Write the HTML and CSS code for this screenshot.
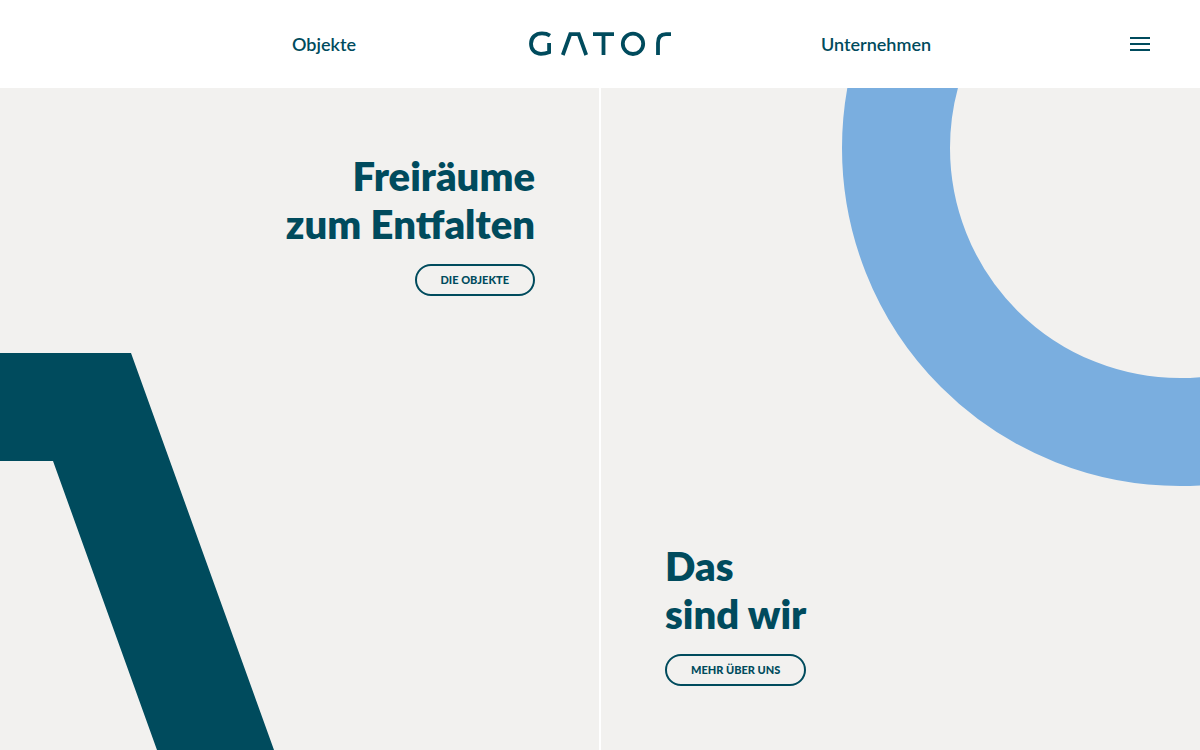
FILE: index.html
```html
<!DOCTYPE html>
<html lang="de">
<head>
    <meta charset="UTF-8">
    <meta name="viewport" content="width=device-width, initial-scale=1.0">
    <title>GATOR</title>
    <link rel="stylesheet" href="styles.css">
</head>
<body>
    <header class="header">
        <nav class="nav">
            <a class="nav-link" href="#objekte">Objekte</a>
            <a class="logo" href="#" aria-label="GATOR">
                <svg width="144" height="26" viewBox="0 0 144 26" fill="none" stroke="currentColor" stroke-width="3.800">
                    <path d="M22 4.600C19.500 3 17 2.400 14 2.400C7.500 2.400 3 6.500 3 12.800S7.500 22.800 13 22.800C16 22.800 18.500 22.300 21.100 21.300V12"/>
                    <path d="M34.800 24L42.300 3.200H50.700L58.200 24"/>
                    <path d="M65 3.200H86M75.500 3.200V24"/>
                    <circle cx="105" cy="12.800" r="10.200"/>
                    <path d="M130 24V12C130 6 132.500 3.200 138 3.200H143"/>
                </svg>
            </a>
            <a class="nav-link" href="#unternehmen">Unternehmen</a>
        </nav>
        <button class="menu" type="button" aria-label="Menü">
            <svg width="20" height="14" viewBox="0 0 20 14" stroke="currentColor" stroke-width="2">
                <path d="M0 1H20M0 7H20M0 13H20"/>
            </svg>
        </button>
    </header>

    <main class="panels">
        <section class="panel panel-objects" id="objekte">
            <svg class="shape shape-a" width="274" height="397" viewBox="0 0 274 397" aria-hidden="true">
                <polygon points="0,0 131,0 274,397 157,397 53,108 0,108"/>
            </svg>
            <div class="content">
                <h2>Freiräume<br>zum Entfalten</h2>
                <a class="button" href="#objekte">Die Objekte</a>
            </div>
        </section>
        <section class="panel panel-company" id="unternehmen">
            <svg class="shape shape-o" width="359" height="398" viewBox="0 0 359 398" aria-hidden="true">
                <ellipse cx="339" cy="60" rx="284" ry="284"/>
            </svg>
            <div class="content">
                <h2>Das<br>sind wir</h2>
                <a class="button" href="#unternehmen">Mehr über uns</a>
            </div>
        </section>
    </main>
</body>
</html>
```

FILE: styles.css
```css
* {
    box-sizing: border-box;
}

body {
    display: flex;
    flex-direction: column;
    min-height: 100vh;
    margin: 0;
    background-color: #fff;
    color: #004b5d;
    font-family: Lato, sans-serif;
}

a {
    color: inherit;
    text-decoration: none;
}

.header {
    display: grid;
    grid-template-columns: 1fr 69% 1fr;
    align-items: center;
    height: 88px;
}

.nav {
    display: grid;
    grid-column: 2;
    grid-template-columns: repeat(3, 1fr);
    align-items: center;
    justify-items: center;
}

.nav-link {
    font-size: 18px;
    font-weight: 600;
    line-height: 24px;
}

.logo svg,
.menu svg {
    display: block;
}

.menu {
    justify-self: end;
    margin-right: 42px;
    padding: 8px;
    border: 0;
    background: none;
    color: inherit;
    cursor: pointer;
}

.panels {
    display: grid;
    flex: 1;
    grid-template-columns: 1fr 1fr;
    gap: 2px;
}

.panel {
    display: flex;
    position: relative;
    overflow: hidden;
    padding: 64px;
    background-color: #f2f1ef;
}

.panel-objects {
    justify-content: flex-end;
    text-align: right;
}

.panel-company {
    align-items: flex-end;
}

.content {
    position: relative;
}

h2 {
    margin: 0 0 16px;
    font-size: 40px;
    font-weight: 800;
    line-height: 48px;
}

.button {
    display: inline-block;
    padding: 0 24px;
    border: 2px solid;
    border-radius: 16px;
    font-size: 11px;
    font-weight: 900;
    line-height: 28px;
    text-transform: uppercase;
    vertical-align: top;
}

.button:hover {
    background-color: #004b5d;
    color: #f2f1ef;
}

/* Große Buchstabenformen hinter dem Text */
.shape {
    position: absolute;
}

.shape-a {
    bottom: 0;
    left: 0;
    fill: #004b5d;
}

.shape-o {
    top: 0;
    right: 0;
    fill: none;
    stroke: #7aaedf;
    stroke-width: 108;
}
```
